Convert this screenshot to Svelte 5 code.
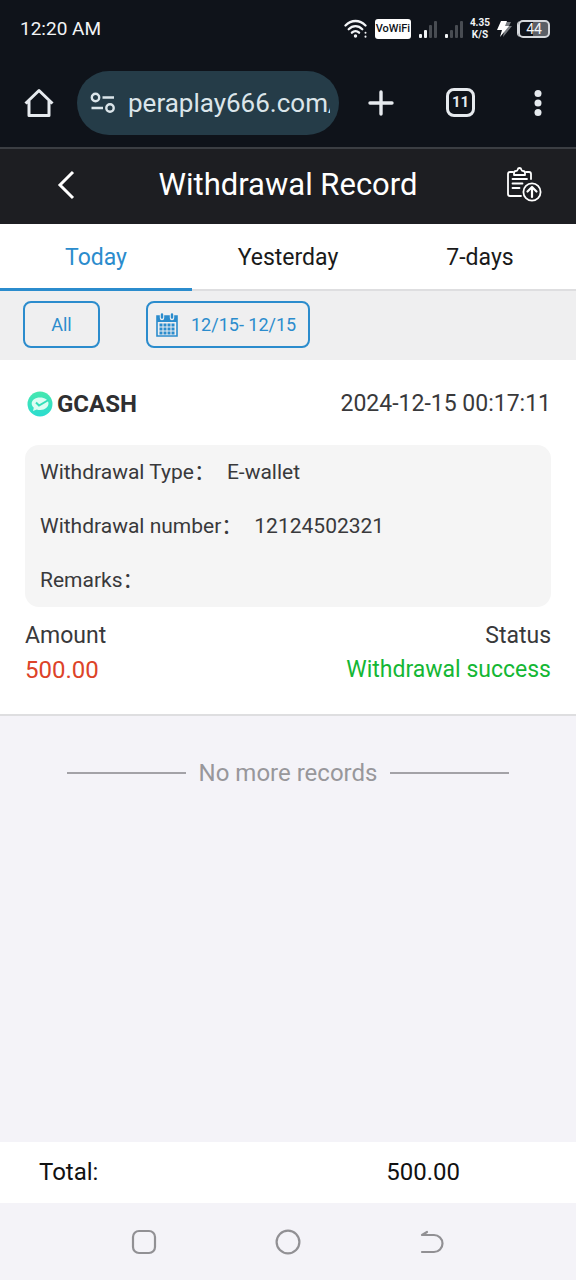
<script lang="ts">
  const tabs = ["Today", "Yesterday", "7-days"];
  let activeTab = $state("Today");

  const records = [
    {
      wallet: "GCASH",
      time: "2024-12-15 00:17:11",
      details: [
        { label: "Withdrawal Type", value: "E-wallet" },
        { label: "Withdrawal number", value: "12124502321" },
        { label: "Remarks", value: "" },
      ],
      amount: 500,
      status: "Withdrawal success",
    },
  ];

  let total = $derived(records.reduce((sum, r) => sum + r.amount, 0));
</script>

{#snippet signal(strong: number)}
  <svg width="19" height="18" viewBox="0 0 19 18" aria-hidden="true">
    {#each [4, 8, 13, 17] as h, i}
      <rect
        x={1 + i * 5}
        y={18 - h}
        width="3"
        height={h}
        rx="1"
        fill={i < strong ? "#f2f4f6" : "#484c52"}
      />
    {/each}
  </svg>
{/snippet}

<div class="screen">
  <div class="status-bar">
    <span class="clock">12:20 AM</span>
    <div class="status-icons">
      <svg width="24" height="20" viewBox="0 0 24 20" fill="none" stroke="#f2f4f6" stroke-width="2.3" stroke-linecap="round" aria-hidden="true">
        <path d="M1.5 6.5C7.3 0.5 15.7 0.5 21.5 6.5" />
        <path d="M4.7 10.2C8.7 6.2 14.3 6.2 18.3 10.2" />
        <path d="M7.9 13.7C10 11.7 13 11.7 15.1 13.7" />
        <circle cx="11.5" cy="17" r="1" fill="#f2f4f6" stroke-width="1.4" />
        <path d="M21.5 13.7v.1M21.5 17.6v.1" stroke-width="2" />
      </svg>
      <span class="vowifi">VoWiFi</span>
      {@render signal(2)}
      {@render signal(1)}
      <div class="speed">
        <span>4.35</span>
        <span>K/S</span>
      </div>
      <div class="power">
        <svg width="15" height="16" viewBox="0 0 15 16" aria-hidden="true">
          <path d="M8 1h6l-2 4h3L6 16l1-6z" fill="#777b80" />
          <path d="M4 0h6L8 5h4L3 16l2-7H0z" fill="#fff" />
        </svg>
        <span class="battery">44</span>
      </div>
    </div>
  </div>

  <div class="browser-bar">
    <button class="icon-button" aria-label="Home">
      <svg width="30" height="30" viewBox="0 0 30 30" fill="none" stroke="#e6eaee" stroke-width="3" stroke-linejoin="round">
        <path d="M1.5 15.5L15 2.5l13.5 13M5 13v14.5h20V13" />
      </svg>
    </button>
    <button class="address">
      <svg width="26" height="22" viewBox="0 0 26 22" fill="none" stroke="#dbe5ea" stroke-width="2.4" aria-hidden="true">
        <circle cx="5.5" cy="5.5" r="3.7" />
        <path d="M12.5 5.5H24M1.5 16H13" />
        <circle cx="20" cy="16" r="3.7" />
      </svg>
      <span class="url">peraplay666.com/</span>
    </button>
    <button class="icon-button" aria-label="New tab">
      <svg width="28" height="28" viewBox="0 0 28 28" stroke="#e6eaee" stroke-width="3.4" stroke-linecap="round">
        <path d="M14 3v22M3 14h22" />
      </svg>
    </button>
    <button class="icon-button" aria-label="Open tabs">
      <span class="tab-count">11</span>
    </button>
    <button class="icon-button" aria-label="Menu">
      <svg width="8" height="28" viewBox="0 0 8 28" fill="#e6eaee">
        <circle cx="4" cy="4.5" r="3.5" />
        <circle cx="4" cy="14" r="3.5" />
        <circle cx="4" cy="23.5" r="3.5" />
      </svg>
    </button>
  </div>

  <header>
    <button class="icon-button" aria-label="Back">
      <svg width="18" height="30" viewBox="0 0 18 30" fill="none" stroke="#fff" stroke-width="3">
        <path d="M16 2L3 15l13 13" />
      </svg>
    </button>
    <h1>Withdrawal Record</h1>
    <button class="icon-button submit" aria-label="Submit record">
      <svg width="36" height="36" viewBox="0 0 36 36" fill="none" stroke="#fff" stroke-width="1.8" stroke-linecap="round" stroke-linejoin="round">
        <path d="M7 5H4Q2 5 2 7v20q0 2 2 2h11M20 5h3q2 0 2 2v5" />
        <path d="M8 8V6q0-2 2-2 1.500 0 1.700-1.500Q12 1 13.500 1T15.300 2.500Q15.500 4 17 4q2 0 2 2v2z" />
        <path d="M6.5 12H21M6.5 16.500h10M6.5 21h7" />
        <circle cx="26" cy="25" r="8.6" />
        <path d="M26 30v-9.5M21.5 24.5l4.5-4.5 4.5 4.5" stroke-width="2.2" />
      </svg>
    </button>
  </header>

  <nav class="tabs">
    {#each tabs as tab}
      <button class:active={tab === activeTab} onclick={() => (activeTab = tab)}>{tab}</button>
    {/each}
  </nav>

  <div class="filters">
    <button class="filter all">All</button>
    <button class="filter range">
      <svg width="22" height="24" viewBox="0 0 22 24" aria-hidden="true">
        <path d="M1 3h20v20H1z" fill="none" stroke="#2b8ccd" stroke-width="1.6" />
        <path d="M1 3h20v6H1z" fill="#2b8ccd" />
        <path d="M6 1v4M16 1v4" stroke="#efeff0" stroke-width="4.4" stroke-linecap="round" />
        <path d="M6 1.5v3M16 1.5v3" stroke="#2b8ccd" stroke-width="2.4" stroke-linecap="round" />
        <path d="M3.5 12h15M3.5 16h15M3.5 20h15" stroke="#2b8ccd" stroke-width="2.8" stroke-dasharray="3 1" />
      </svg>
      12/15- 12/15
    </button>
  </div>

  {#each records as record}
    <article>
      <div class="row title">
        <h2>
          <svg width="26" height="26" viewBox="0 0 26 26" aria-hidden="true">
            <defs>
              <linearGradient id="mint" x1="0" y1="0" x2="0" y2="1">
                <stop offset="0" stop-color="#46e8ae" />
                <stop offset="1" stop-color="#2bdcd0" />
              </linearGradient>
            </defs>
            <circle cx="13" cy="13" r="12.5" fill="url(#mint)" />
            <path d="M13 6.5c5 0 8.5 2.5 8.5 6s-3.5 6.5-8 6.5c-1.5 0-2.700-.2-3.700-.6L6 20l.8-3.300C5.500 15.600 4.700 14.200 4.700 12.600c0-3.600 3.500-6.100 8.300-6.100z" fill="#dcfdf3" />
            <path d="M9 11.500l3 3 9.500-5.500" fill="none" stroke="#33dfb9" stroke-width="2" />
          </svg>
          {record.wallet}
        </h2>
        <time>{record.time}</time>
      </div>
      <dl>
        {#each record.details as item}
          <div>
            <dt>{item.label}：</dt>
            <dd>{item.value}</dd>
          </div>
        {/each}
      </dl>
      <div class="row">
        <span>Amount</span>
        <span>Status</span>
      </div>
      <div class="row result">
        <span class="amount">{record.amount.toFixed(2)}</span>
        <span class="success">{record.status}</span>
      </div>
    </article>
  {/each}

  <p class="end">No more records</p>

  <footer>
    <span>Total:</span>
    <span>{total.toFixed(2)}</span>
  </footer>

  <div class="system-nav">
    <button class="icon-button" aria-label="Recent apps">
      <svg width="26" height="26" viewBox="0 0 26 26" fill="none" stroke="#919094" stroke-width="2.2">
        <rect x="2" y="2" width="22" height="22" rx="6" />
      </svg>
    </button>
    <button class="icon-button" aria-label="Home screen">
      <svg width="26" height="26" viewBox="0 0 26 26" fill="none" stroke="#919094" stroke-width="2.2">
        <circle cx="13" cy="13" r="11.4" />
      </svg>
    </button>
    <button class="icon-button" aria-label="Go back">
      <svg width="26" height="26" viewBox="0 0 26 26" fill="none" stroke="#919094" stroke-width="2.2" stroke-linecap="round" stroke-linejoin="round">
        <path d="M8 3L3 6h12a8.500 8.500 0 0 1 0 17H3" />
      </svg>
    </button>
  </div>
</div>

<style>
  :global(body) {
    background: #f4f3f8;
  }

  .screen {
    box-sizing: border-box;
    color: #39393b;
    display: flex;
    flex-direction: column;
    font-family: Roboto, "Noto Sans CJK SC", sans-serif;
    font-size: 23px;
    line-height: 32px;
    min-height: 100vh;
  }

  button {
    background: none;
    border: none;
    color: inherit;
    cursor: pointer;
    font: inherit;
    padding: 0;
  }

  svg {
    display: block;
    flex: none;
  }

  h1,
  h2,
  dl,
  dd,
  p {
    font-weight: 400;
    margin: 0;
  }

  .icon-button {
    align-items: center;
    display: flex;
    justify-content: center;
  }

  .status-bar {
    align-items: center;
    background: #0f131a;
    color: #f2f4f6;
    display: flex;
    height: 58px;
    justify-content: space-between;
    padding: 0 26px 0 20px;
  }

  .clock {
    font-size: 19px;
  }

  .status-icons {
    align-items: center;
    display: flex;
    gap: 7px;
  }

  .vowifi {
    background: #fff;
    border-radius: 3px;
    color: #0f131a;
    font-size: 11px;
    font-weight: 500;
    line-height: 20px;
    text-align: center;
    width: 36px;
  }

  .speed {
    display: flex;
    flex-direction: column;
    font-size: 10px;
    font-weight: 700;
    line-height: 12px;
    text-align: center;
  }

  .power {
    align-items: center;
    display: flex;
    gap: 6px;
  }

  .battery {
    background: linear-gradient(90deg, #0f131a 48%, #5b5f66 48%);
    border: 2px solid #d5d8dc;
    border-radius: 5px;
    box-shadow: -2px 0 0 -1px #d5d8dc;
    font-size: 14px;
    line-height: 14px;
    text-align: center;
    width: 28px;
  }

  .browser-bar {
    align-items: center;
    background: #0f131a;
    border-bottom: 2px solid #3b3e43;
    color: #e6eaee;
    display: grid;
    grid-template-columns: 77px 1fr 83px 77px 77px;
    height: 89px;
  }

  .address {
    align-items: center;
    background: #253c48;
    border-radius: 32px;
    color: #dbe5ea;
    display: flex;
    font-size: 26px;
    gap: 12px;
    height: 64px;
    min-width: 0;
    padding: 0 9px 0 13px;
  }

  .url {
    overflow: hidden;
    white-space: nowrap;
  }

  .tab-count {
    border: 3px solid #e6eaee;
    border-radius: 8px;
    font-size: 15px;
    font-weight: 700;
    line-height: 23px;
    width: 23px;
  }

  header {
    align-items: center;
    background: #1d1e22;
    box-sizing: border-box;
    color: #fff;
    display: grid;
    grid-template-columns: 132px 1fr 104px;
    height: 75px;
    padding-bottom: 4px;
  }

  .submit {
    justify-content: flex-end;
    padding-right: 34px;
  }

  h1 {
    font-size: 31px;
    line-height: 40px;
    padding-right: 28px;
    text-align: center;
    white-space: nowrap;
  }

  .tabs {
    background: #fff;
    color: #1a1a1a;
    display: grid;
    grid-template-columns: repeat(3, 1fr);
  }

  .tabs button {
    border-bottom: 2px solid #dedee0;
    height: 67px;
    padding-top: 2px;
  }

  .tabs .active {
    border-color: #2b8ccd;
    box-shadow: inset 0 -1px #2b8ccd;
    color: #2b8ccd;
  }

  .filters {
    background: #efeff0;
    display: flex;
    gap: 46px;
    padding: 10px 23px 12px;
  }

  .filter {
    align-items: center;
    border: 2px solid #2b8ccd;
    border-radius: 8px;
    box-sizing: border-box;
    color: #2b8ccd;
    display: flex;
    font-size: 18px;
    height: 47px;
    justify-content: center;
  }

  .all {
    width: 77px;
  }

  .range {
    gap: 13px;
    padding: 0 12px 0 8px;
  }

  article {
    background: #fff;
    border-bottom: 2px solid #dedee0;
    padding: 28px 25px;
  }

  .row {
    display: flex;
    justify-content: space-between;
  }

  .title {
    align-items: center;
    margin-bottom: 25px;
  }

  h2 {
    align-items: center;
    color: #2f2f31;
    display: flex;
    font-size: 24px;
    font-weight: 700;
    gap: 4px;
    padding-left: 2px;
  }

  dl {
    background: #f5f5f5;
    border-radius: 14px;
    display: flex;
    flex-direction: column;
    font-size: 21px;
    gap: 22px;
    margin-bottom: 13px;
    padding: 11px 15px;
  }

  dl div {
    display: flex;
    gap: 12px;
  }

  .result {
    margin-top: 2px;
  }

  .amount {
    color: #dd4328;
    font-size: 24px;
  }

  .success {
    color: #14b734;
  }

  .end {
    align-items: center;
    color: #98979b;
    display: flex;
    font-size: 24px;
    gap: 13px;
    padding: 41px 67px;
    white-space: nowrap;
  }

  .end::before,
  .end::after {
    background: #a3a2a7;
    content: "";
    flex: 1;
    height: 2px;
  }

  footer {
    background: #fff;
    color: #111;
    display: grid;
    font-size: 24px;
    grid-template-columns: 2fr 1fr;
    line-height: 61px;
    margin-top: auto;
    padding: 0 16px 0 39px;
  }

  .system-nav {
    display: grid;
    grid-template-columns: repeat(3, 1fr);
    height: 77px;
    padding: 0 72px;
  }
</style>
